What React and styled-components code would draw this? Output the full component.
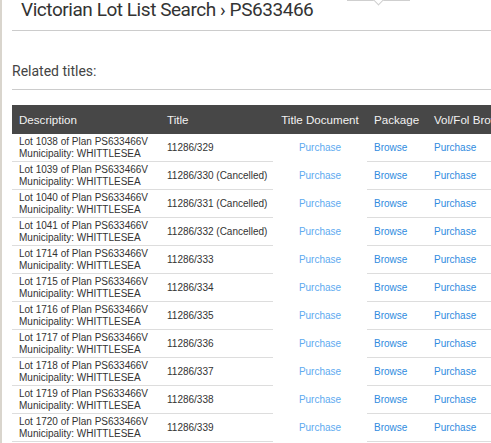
import styled, { createGlobalStyle } from "styled-components";

const GlobalStyle = createGlobalStyle`
    html, body {
        margin: 0;
        padding: 0;
        background: #fff;
        overflow: hidden;
    }
`;

const COLUMNS = [
    { key: "desc", label: "Description", width: 148 },
    { key: "title", label: "Title", width: 113 },
    { key: "doc", label: "Title Document", width: 94, plain: true },
    { key: "pkg", label: "Package", width: 60 },
    { key: "volfol", label: "Vol/Fol Browse", width: 110 },
];

const LOTS = [
    { lot: 1038, title: "11286/329" },
    { lot: 1039, title: "11286/330 (Cancelled)" },
    { lot: 1040, title: "11286/331 (Cancelled)" },
    { lot: 1041, title: "11286/332 (Cancelled)" },
    { lot: 1714, title: "11286/333" },
    { lot: 1715, title: "11286/334" },
    { lot: 1716, title: "11286/335" },
    { lot: 1717, title: "11286/336" },
    { lot: 1718, title: "11286/337" },
    { lot: 1719, title: "11286/338" },
    { lot: 1720, title: "11286/339" },
];

export default function App() {
    return (
        <Page>
            <GlobalStyle />
            <MenuEdge />
            <Content>
                <Heading>Victorian Lot List Search › PS633466</Heading>
                <Rule />
                <SubHeading>Related titles:</SubHeading>
                <Rule />
                <Table>
                    <colgroup>
                        {COLUMNS.map((c) => (
                            <col key={c.key} style={{ width: c.width }} />
                        ))}
                    </colgroup>
                    <thead>
                        <tr>
                            {COLUMNS.map((c) => (
                                <Th key={c.key} $center={c.plain}>
                                    {c.label}
                                </Th>
                            ))}
                        </tr>
                    </thead>
                    <tbody>
                        {LOTS.map((row) => (
                            <tr key={row.lot}>
                                <Td>
                                    Lot {row.lot} of Plan PS633466V
                                    <br />
                                    Municipality: WHITTLESEA
                                </Td>
                                <Td>{row.title}</Td>
                                <Td $plain>
                                    <Link $light>Purchase</Link>
                                </Td>
                                <Td>
                                    <Link>Browse</Link>
                                </Td>
                                <Td>
                                    <Link>Purchase</Link>
                                </Td>
                            </tr>
                        ))}
                    </tbody>
                </Table>
            </Content>
        </Page>
    );
}

const Page = styled.div`
    position: relative;
    width: 491px;
    height: 443px;
    overflow: hidden;
    border-left: 2px solid #d9d5cd;
    box-sizing: border-box;
    background: #fff;
`;

// bottom edge of a dropdown panel hanging over the heading
const MenuEdge = styled.div`
    position: absolute;
    top: 0;
    left: 345px;
    width: 63px;
    height: 1px;
    background: #cfcfcf;

    &::after {
        content: "";
        position: absolute;
        left: 28px;
        top: 0;
        width: 6px;
        height: 6px;
        background: #fff;
        border-right: 1px solid #cfcfcf;
        border-bottom: 1px solid #cfcfcf;
        transform: translateY(-3px) rotate(45deg);
    }
`;

const Content = styled.div`
    padding-left: 10px;
`;

const Heading = styled.h1`
    margin: -2px 0 0;
    padding-left: 9px;
    font-family: Roboto, "Liberation Sans", sans-serif;
    font-weight: 400;
    font-size: 19px;
    letter-spacing: -0.45px;
    line-height: 24px;
    color: #333;
`;

const Rule = styled.div`
    height: 1px;
    background: #cccccc;
    margin-top: 8px;
`;

const SubHeading = styled.h2`
    margin: 30px 0 0;
    font-family: Roboto, "Liberation Sans", sans-serif;
    font-weight: 400;
    font-size: 14px;
    line-height: 20px;
    color: #444;
`;

const Table = styled.table`
    margin-top: 15px;
    border-collapse: collapse;
    table-layout: fixed;
    width: 525px;
    font-family: "Liberation Sans", Arial, sans-serif;
`;

const Th = styled.th`
    background: #474747;
    color: #f2f2f2;
    font-weight: 400;
    font-size: 11.6px;
    line-height: 15px;
    padding: 7px 7px;
    text-align: ${(p) => (p.$center ? "center" : "left")};
    white-space: nowrap;
    overflow: hidden;
`;

const Td = styled.td`
    font-size: 10px;
    line-height: 11.5px;
    color: #333;
    padding: 2px 7px;
    height: 23px;
    vertical-align: middle;
    white-space: nowrap;
    text-align: ${(p) => (p.$plain ? "center" : "left")};
    border-bottom: 1px solid ${(p) => (p.$plain ? "transparent" : "#dddddd")};
`;

const Link = styled.a`
    color: ${(p) => (p.$light ? "#5eaaf0" : "#2f8be0")};
    text-decoration: none;
    cursor: pointer;
`;
